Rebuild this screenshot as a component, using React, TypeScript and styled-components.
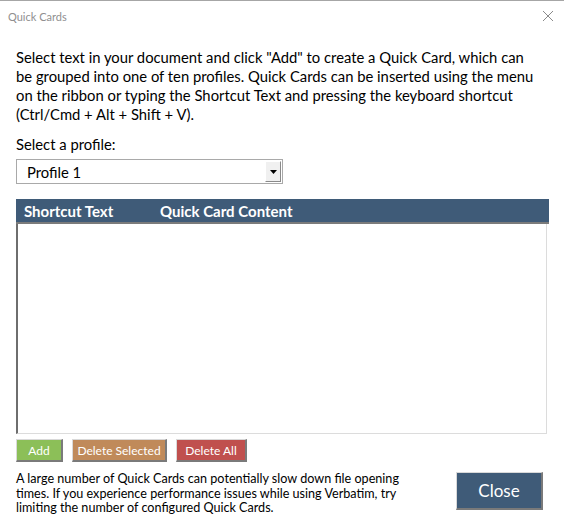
import React from "react";
import styled, { createGlobalStyle } from "styled-components";

const GlobalStyle = createGlobalStyle`
  html, body {
    margin: 0;
    padding: 0;
    background: #ffffff;
  }
  body {
    font-family: "Lato", "Open Sans", sans-serif;
    color: #000000;
  }
`;

export default function App(): React.ReactElement {
  return (
    <>
      <GlobalStyle />
      <Dialog>
        <TitleBar>
          <Title>Quick Cards</Title>
          <CloseX aria-label="close">
            <svg width="12" height="12" viewBox="0 0 12 12">
              <path d="M1 1 L11 11 M11 1 L1 11" stroke="#8a8a8a" strokeWidth="1" />
            </svg>
          </CloseX>
        </TitleBar>

        <Body>
          <Intro>
            Select text in your document and click "Add" to create a Quick Card, which can
            <br />
            be grouped into one of ten profiles. Quick Cards can be inserted using the menu
            <br />
            on the ribbon or typing the Shortcut Text and pressing the keyboard shortcut
            <br />
            (Ctrl/Cmd + Alt + Shift + V).
          </Intro>

          <Label>Select a profile:</Label>
          <Select>
            <span>Profile 1</span>
            <DropButton>
              <svg width="7" height="4" viewBox="0 0 7 4">
                <path d="M0 0 H7 L3.5 4 Z" fill="#000" />
              </svg>
            </DropButton>
          </Select>

          <Table>
            <HeaderRow>
              <HeaderCell $width={136}>Shortcut Text</HeaderCell>
              <HeaderCell>Quick Card Content</HeaderCell>
            </HeaderRow>
            <ListBox />
          </Table>

          <ButtonRow>
            <SmallButton $bg="#8cbf58" $width={47}>Add</SmallButton>
            <SmallButton $bg="#c08a5a" $width={95}>Delete Selected</SmallButton>
            <SmallButton $bg="#c0504e" $width={71}>Delete All</SmallButton>
          </ButtonRow>

          <Footer>
            <Note>
              A large number of Quick Cards can potentially slow down file opening
              <br />
              times. If you experience performance issues while using Verbatim, try
              <br />
              limiting the number of configured Quick Cards.
            </Note>
            <CloseButton>Close</CloseButton>
          </Footer>
        </Body>
      </Dialog>
    </>
  );
}

const Dialog = styled.div`
  width: 564px;
  height: 525px;
  box-sizing: border-box;
  border-top: 1px solid #a6a6a6;
  background: #ffffff;
  display: flex;
  flex-direction: column;
`;

const TitleBar = styled.div`
  height: 30px;
  display: flex;
  align-items: center;
  justify-content: space-between;
  padding: 0 10px 0 8px;
`;

const Title = styled.div`
  font-size: 11px;
  color: #8f8f8f;
`;

const CloseX = styled.div`
  display: flex;
  align-items: center;
`;

const Body = styled.div`
  padding: 17px 15px 0 16px;
  display: flex;
  flex-direction: column;
`;

const Intro = styled.p`
  margin: 0;
  font-size: 14.8px;
  line-height: 19px;
  color: #000;
`;

const Label = styled.div`
  margin-top: 11px;
  font-size: 14.8px;
  line-height: 19px;
`;

const Select = styled.div`
  margin-top: 5px;
  width: 267px;
  height: 25px;
  box-sizing: border-box;
  border: 1px solid #a9a9a9;
  display: flex;
  align-items: center;
  justify-content: space-between;
  padding: 0 1px 0 10px;
  font-size: 14.8px;

  span {
    padding-top: 1px;
  }
`;

const DropButton = styled.div`
  width: 16px;
  height: 21px;
  box-sizing: border-box;
  background: #f0f0f0;
  border-top: 1px solid #ffffff;
  border-left: 1px solid #ffffff;
  border-right: 1px solid #8a8a8a;
  border-bottom: 1px solid #8a8a8a;
  display: flex;
  align-items: center;
  justify-content: center;
`;

const Table = styled.div`
  margin-top: 15px;
  width: 533px;
  display: flex;
  flex-direction: column;
`;

const HeaderRow = styled.div`
  height: 23px;
  background: #3f5b78;
  border-bottom: 2px solid #7b7b7b;
  display: flex;
  align-items: center;
  padding-left: 8px;
`;

const HeaderCell = styled.div<{ $width?: number }>`
  width: ${(p) => (p.$width ? `${p.$width}px` : "auto")};
  color: #ffffff;
  font-weight: 700;
  font-size: 15px;
`;

const ListBox = styled.div`
  height: 210px;
  width: 531px;
  box-sizing: border-box;
  border-left: 2px solid #6e6e6e;
  border-right: 1px solid #dcdcdc;
  border-bottom: 1px solid #dcdcdc;
  background: #ffffff;
`;

const ButtonRow = styled.div`
  margin-top: 5px;
  display: flex;
  gap: 9px;
`;

const SmallButton = styled.button<{ $bg: string; $width: number }>`
  height: 23px;
  width: ${(p) => p.$width}px;
  padding: 0;
  box-sizing: border-box;
  background: ${(p) => p.$bg};
  color: #ffffff;
  font-family: "Lato", "Open Sans", sans-serif;
  font-size: 12px;
  border: none;
  border-right: 2px solid #7a7a7a;
  border-bottom: 2px solid #7a7a7a;
  border-top: 1px solid #d9d9d9;
  border-left: 1px solid #d9d9d9;
`;

const Footer = styled.div`
  margin-top: 8px;
  display: flex;
  align-items: flex-start;
  justify-content: space-between;
`;

const Note = styled.p`
  margin: 2px 0 0;
  font-size: 12.6px;
  line-height: 14.5px;
  color: #000;
`;

const CloseButton = styled.button`
  margin-top: 2px;
  margin-right: 6px;
  width: 87px;
  height: 38px;
  box-sizing: border-box;
  background: #3f5b78;
  color: #ffffff;
  font-family: "Lato", "Open Sans", sans-serif;
  font-size: 17px;
  border: none;
  border-top: 1px solid #d9d9d9;
  border-left: 1px solid #d9d9d9;
  border-right: 2px solid #7a7a7a;
  border-bottom: 2px solid #7a7a7a;
`;
